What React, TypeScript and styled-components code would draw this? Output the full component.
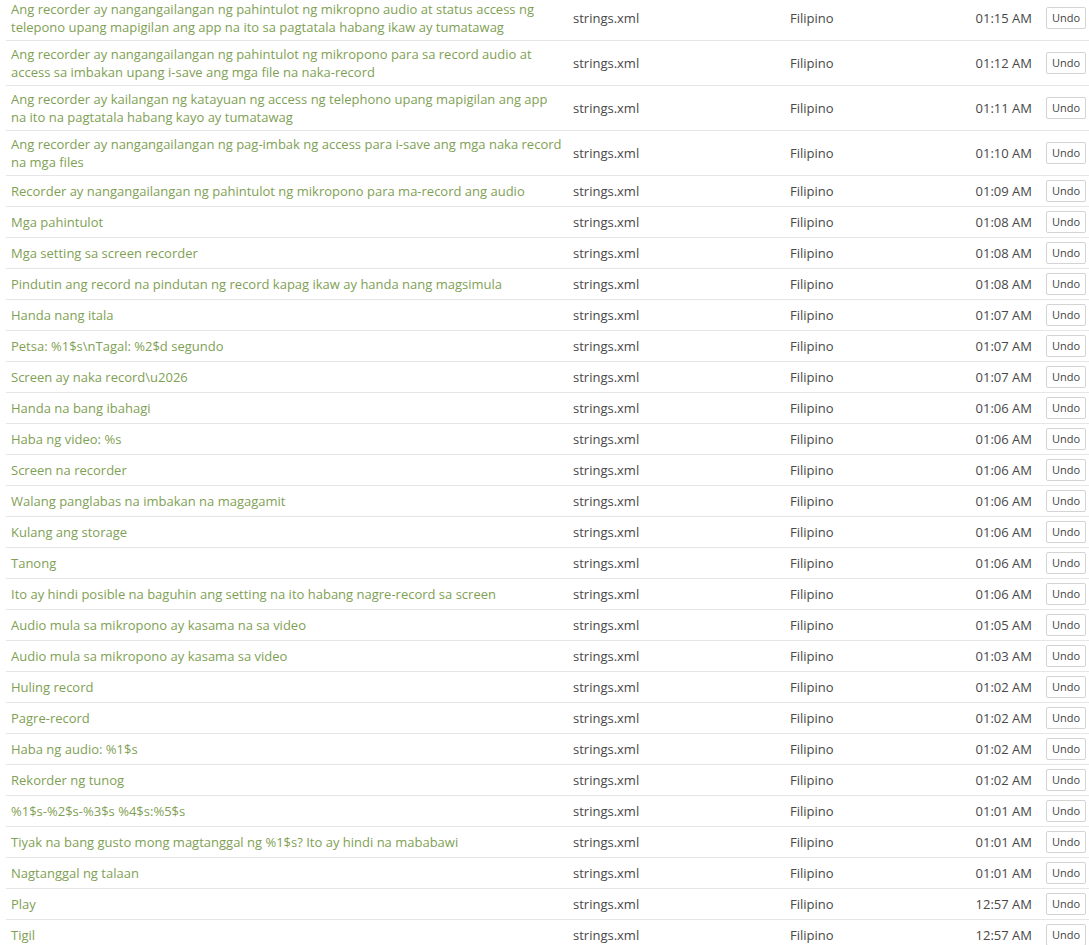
import React from "react";
import styled, { createGlobalStyle } from "styled-components";

const GlobalStyle = createGlobalStyle`
  html, body {
    margin: 0;
    padding: 0;
    background: #ffffff;
    overflow: hidden;
  }
  body {
    font-family: "Open Sans", "Liberation Sans", sans-serif;
  }
`;

const Wrapper = styled.div`
  padding-left: 6px;
  margin-top: -4px;
`;

const Table = styled.table`
  width: 100%;
  border-collapse: collapse;
  table-layout: fixed;
  font-size: 13px;
  line-height: 18px;
`;

const Row = styled.tr`
  border-bottom: 1px solid #e6e6e6;
`;

const Cell = styled.td<{ $align?: string }>`
  padding: 4px 5px;
  vertical-align: middle;
  text-align: ${(p) => p.$align || "left"};
  color: #484848;
  white-space: nowrap;
`;

const TextCell = styled(Cell)`
  white-space: normal;
  color: #7f9f55;
`;

const TimeCell = styled(Cell)`
  text-align: right;
  padding-right: 9px;
`;

const UndoButton = styled.button`
  display: block;
  height: 22px;
  width: 40px;
  padding: 0;
  border: 1px solid #d4d4d4;
  border-radius: 2px;
  background: #ffffff;
  color: #444444;
  font-family: "Open Sans", "Liberation Sans", sans-serif;
  font-size: 11px;
  line-height: 20px;
  cursor: pointer;
`;

type Entry = { text: string; time: string };

const entries: Entry[] = [
  { text: "Ang recorder ay nangangailangan ng pahintulot ng mikropno audio at status access ng telepono upang mapigilan ang app na ito sa pagtatala habang ikaw ay tumatawag", time: "01:15 AM" },
  { text: "Ang recorder ay nangangailangan ng pahintulot ng mikropono para sa record audio at access sa imbakan upang i-save ang mga file na naka-record", time: "01:12 AM" },
  { text: "Ang recorder ay kailangan ng katayuan ng access ng telephono upang mapigilan ang app na ito na pagtatala habang kayo ay tumatawag", time: "01:11 AM" },
  { text: "Ang recorder ay nangangailangan ng pag-imbak ng access para i-save ang mga naka record na mga files", time: "01:10 AM" },
  { text: "Recorder ay nangangailangan ng pahintulot ng mikropono para ma-record ang audio", time: "01:09 AM" },
  { text: "Mga pahintulot", time: "01:08 AM" },
  { text: "Mga setting sa screen recorder", time: "01:08 AM" },
  { text: "Pindutin ang record na pindutan ng record kapag ikaw ay handa nang magsimula", time: "01:08 AM" },
  { text: "Handa nang itala", time: "01:07 AM" },
  { text: "Petsa: %1$s\\nTagal: %2$d segundo", time: "01:07 AM" },
  { text: "Screen ay naka record\\u2026", time: "01:07 AM" },
  { text: "Handa na bang ibahagi", time: "01:06 AM" },
  { text: "Haba ng video: %s", time: "01:06 AM" },
  { text: "Screen na recorder", time: "01:06 AM" },
  { text: "Walang panglabas na imbakan na magagamit", time: "01:06 AM" },
  { text: "Kulang ang storage", time: "01:06 AM" },
  { text: "Tanong", time: "01:06 AM" },
  { text: "Ito ay hindi posible na baguhin ang setting na ito habang nagre-record sa screen", time: "01:06 AM" },
  { text: "Audio mula sa mikropono ay kasama na sa video", time: "01:05 AM" },
  { text: "Audio mula sa mikropono ay kasama sa video", time: "01:03 AM" },
  { text: "Huling record", time: "01:02 AM" },
  { text: "Pagre-record", time: "01:02 AM" },
  { text: "Haba ng audio: %1$s", time: "01:02 AM" },
  { text: "Rekorder ng tunog", time: "01:02 AM" },
  { text: "%1$s-%2$s-%3$s %4$s:%5$s", time: "01:01 AM" },
  { text: "Tiyak na bang gusto mong magtanggal ng %1$s? Ito ay hindi na mababawi", time: "01:01 AM" },
  { text: "Nagtanggal ng talaan", time: "01:01 AM" },
  { text: "Play", time: "12:57 AM" },
  { text: "Tigil", time: "12:57 AM" },
];

export default function App() {
  return (
    <>
      <GlobalStyle />
      <Wrapper>
        <Table>
          <colgroup>
            <col style={{ width: 562 }} />
            <col style={{ width: 217 }} />
            <col />
            <col style={{ width: 130 }} />
            <col style={{ width: 48 }} />
          </colgroup>
          <tbody>
            {entries.map((e, i) => (
              <Row key={i}>
                <TextCell>{e.text}</TextCell>
                <Cell>strings.xml</Cell>
                <Cell>Filipino</Cell>
                <TimeCell>{e.time}</TimeCell>
                <Cell>
                  <UndoButton>Undo</UndoButton>
                </Cell>
              </Row>
            ))}
          </tbody>
        </Table>
      </Wrapper>
    </>
  );
}
